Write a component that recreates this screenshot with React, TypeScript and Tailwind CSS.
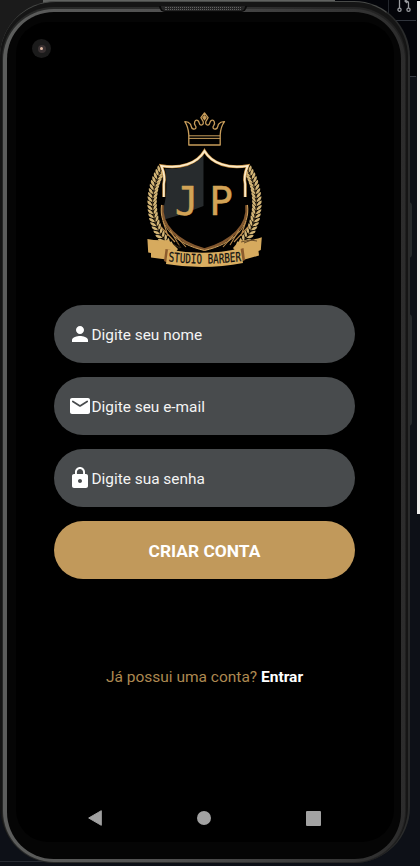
import type { ReactNode } from "react";

function Leaves() {
  const items: ReactNode[] = [];
  const count = 21;
  for (let i = 0; i < count; i++) {
    const t = i / (count - 1);
    const u = 1 - t;
    const x = u * u * u * 161 + 3 * u * u * t * 149 + 3 * u * t * t * 148 + t * t * t * 170;
    const y = u * u * u * 171 + 3 * u * u * t * 192 + 3 * u * t * t * 224 + t * t * t * 247;
    const lean = 24 - t * 62;
    items.push(
      <g key={i} transform={`translate(${x} ${y}) rotate(${lean})`}>
        <path d="M0 2 Q-5.5 .5 -5 -4 Q-1 -3 0 2Z" />
        <path d="M0 2 Q5 .5 4.5 -4 Q1 -3 0 2Z" />
      </g>
    );
  }
  return (
    <g fill="#d3b576">
      {items}
      <path d="M161 171 C149 192 148 224 170 247" fill="none" stroke="#4b3a20" strokeWidth=".8" />
    </g>
  );
}

function Logo() {
  return (
    <svg className="h-[160px] w-[120px]" viewBox="145 110 120 160" role="img" aria-label="JP Studio Barber">
      <g fill="none" stroke="#c89d5b" strokeWidth="1.3" strokeLinejoin="round">
        <path d="M188.8 145V135C188.5 129 187 125 184.8 121.7C187 121.6 189 122.3 190.4 124.1C191.6 125.7 190.5 128.5 193.3 129C196.3 129.5 196.6 127.2 195.2 125.4C193.6 123.2 194.8 119.4 197.5 120.3C200 121.2 198.4 124.8 201 125.1C203.9 125.3 204 121.6 202.1 119.7L200.9 117.6L204.5 113L208.1 117.6L206.9 119.7C205 121.6 205.1 125.3 208 125.1C210.6 124.8 209 121.2 211.5 120.3C214.2 119.4 215.4 123.2 213.8 125.4C212.4 127.2 212.7 129.5 215.7 129C218.5 128.5 217.4 125.7 218.6 124.1C220 122.3 222 121.6 224.5 121.7C222 125 220.5 129 220.2 135V145Z" />
        <path d="M188.8 135.8H220.2M188.8 138.4H220.2" strokeWidth="1" />
        <path d="M204.5 115.8L206.1 117.7L204.5 119.7L202.9 117.7Z" fill="#c89d5b" />
      </g>
      <Leaves />
      <g transform="translate(409 0) scale(-1 1)"><Leaves /></g>
      <path d="M204.5 151C198 162 180 169 161.5 165.5C166 180 164 195 161 211C163 230 184 246 204.5 251C225 246 246 230 248 211C245 195 243 180 247.5 165.5C229 169 211 162 204.5 151Z" fill="#010101" />
      <path d="M203.5 155C197 164 182 170 165 168.5C167 181 167 195 164 206L162.5 220L180 215L203.5 206Z" fill="#272b2d" />
      <path d="M162.5 205C160 225 177 242 204.5 249.5C232 242 249 225 246.5 205" fill="none" stroke="#80562e" strokeWidth="2.6" />
      <path d="M161.5 205C158.5 227 176 244 204.5 250.5C233 244 250.5 227 247.5 205" fill="none" stroke="#d0a15c" strokeWidth="1" />
      <path d="M163 221L168 236M160 226L175 242M246 221L241 236M249 226L234 242M170 230L179 245M239 230L230 245M176 236L186 247M233 236L223 247" stroke="#b98a4c" strokeWidth="1.1" />
      <path d="M163.8 197V184C165.5 177 163.5 171 161.3 165.8C180 169 197 164 204.5 151C212 164 229 169 247.7 165.8C245.5 171 243.5 177 245.2 184V197" fill="none" stroke="#c58d3f" strokeWidth="3" />
      <path d="M163.8 197V184C165.5 177 163.5 171 161.3 165.8C180 169 197 164 204.5 151C212 164 229 169 247.7 165.8C245.5 171 243.5 177 245.2 184V197" fill="none" stroke="#fbeac8" strokeWidth="1.8" />
      <path d="M147.4 239.1Q157 241 168 240L173 244L178 249L170 260L151 257.5L151 253L148.2 252.5Z" fill="#d6aa5e" />
      <path d="M261.8 237.2Q251 241 240 240L233 248L243 260L259 255.5L258.5 251L260.8 250Z" fill="#d6aa5e" />
      <path d="M165.5 249L171 250L168 263L164 261ZM243.5 248L237.5 250L241 262L245 260Z" fill="#8c5b2d" />
      <path d="M168 249.5Q204.5 256.5 240.5 248.5L243 263Q204.5 270.5 166 264Z" fill="#d9ad60" />
      <path d="M241 242L250 240L257 241M244 243L254 239M173 244L180 248M177 242L181 248" fill="none" stroke="#4e371d" strokeWidth=".8" />
      <g fill="#d2a356" fontFamily="'DejaVu Sans Mono', monospace" fontSize="39.5">
        <text x="174.8" y="214.8" stroke="#d2a356" strokeWidth=".4">J</text>
        <text x="209.2" y="214.8" stroke="#d2a356" strokeWidth=".4">P</text>
      </g>
      <defs><path id="ribbon-line" d="M240.7 261.2Q292.5 266.2 347 260.8" /></defs>
      <g transform="scale(.7 1)">
        <text fill="#111" stroke="#111" strokeWidth=".25" fontFamily="'DejaVu Sans Mono', monospace" fontSize="13">
          <textPath href="#ribbon-line" textLength="104" lengthAdjust="spacing">STUDIO BARBER</textPath>
        </text>
      </g>
    </svg>
  );
}

const icons = {
  person: "M12 12c2.21 0 4-1.79 4-4s-1.79-4-4-4-4 1.79-4 4 1.79 4 4 4zm0 2c-2.67 0-8 1.34-8 4v2h16v-2c0-2.66-5.33-4-8-4z",
  mail: "M20 4H4c-1.1 0-1.99.9-1.99 2L2 18c0 1.1.9 2 2 2h16c1.1 0 2-.9 2-2V6c0-1.1-.9-2-2-2zm-.4 4.25l-7.07 4.42c-.32.2-.74.2-1.06 0L4.4 8.25a.85.85 0 1 1 .9-1.44L12 11l6.7-4.19a.85.85 0 1 1 .9 1.44z",
  lock: "M18 8h-1V6c0-2.76-2.24-5-5-5S7 3.24 7 6v2H6c-1.1 0-2 .9-2 2v10c0 1.1.9 2 2 2h12c1.1 0 2-.9 2-2V10c0-1.1-.9-2-2-2zm-6 9c-1.1 0-2-.9-2-2s.9-2 2-2 2 .9 2 2-.9 2-2 2zm3.1-9H8.9V6c0-1.71 1.39-3.1 3.1-3.1s3.1 1.39 3.1 3.1v2z",
};

function Field({ icon, label }: { icon: keyof typeof icons; label: string }) {
  return (
    <label className="flex h-[58px] items-center rounded-full bg-[#484b4d] pl-[14px]">
      <svg className="size-6 shrink-0" viewBox="0 0 24 24" fill="white"><path d={icons[icon]} /></svg>
      <input className="-ml-[0.5px] w-[230px] bg-transparent pt-[3px] text-[15.4px] text-white outline-none placeholder:text-[#f4f4f4] placeholder:opacity-100" placeholder={label} aria-label={label} />
    </label>
  );
}

function Backdrop() {
  return (
    <div className="absolute inset-0" aria-hidden="true">
      <div className="absolute top-0 left-0 h-16 w-[43px] bg-[#1b1b1b]" />
      <div className="absolute top-0 left-[43px] h-2 w-[292px] bg-[#606260]" />
      <div className="absolute top-0 right-0 h-[76px] w-[85px] bg-[#030409]" />
      <div className="absolute top-5 right-1 h-px w-20 bg-[#30343c]" />
      <div className="absolute top-0 left-[388px] h-5 w-px bg-[#24272d]" />
      <div className="absolute top-[76px] right-1 h-px w-8 bg-[#343841]" />
      <div className="absolute top-px right-0 h-[513px] w-[3px] bg-[#efeeed]" />
      <div className="absolute top-[861px] left-0 h-px w-[204px] bg-[#282b32]" />
      <svg className="absolute top-[-3px] left-[396px] h-4 w-4" viewBox="0 0 16 16" fill="none" stroke="#9a9ca0" strokeWidth="1.3">
        <circle cx="3.5" cy="12.7" r="1.6" /><circle cx="12.5" cy="12.7" r="1.6" />
        <path d="M3.5 11V2M12.5 11V6Q12.5 4 9 4M11 2L9 4L11 6" />
      </svg>
      <div className="absolute top-[202px] left-[408px] h-[56px] w-1 rounded-r bg-[#26292c]" />
      <div className="absolute top-[314px] left-[408px] h-[112px] w-1 rounded-r bg-[#26292c]" />
    </div>
  );
}

export default function App() {
  return (
    <main className="relative h-[866px] w-[420px] overflow-hidden bg-[#0d1017] font-[Roboto,sans-serif]">
      <Backdrop />
      <div className="relative h-[863px] w-[410px] pt-px">
        <div className="h-[862px] rounded-[56px] border-t border-r-2 border-t-[#484a48] border-r-[#2a2b2b] bg-[#151515] pt-[5px] pr-[2px] pl-[2px]">
          <div className="h-[856px] rounded-[52px] bg-linear-to-r from-[#262726] via-[#303030] via-60% to-[#202020] pt-[2px] pr-px pb-px pl-px">
            <div className="h-[853px] rounded-[51px] bg-linear-to-r from-[#5c5d5c] from-1% via-[#505050] via-40% to-[#2c2c2c] pt-[3px] pr-[4px] pb-[3px] pl-[4px]">
              <div className="h-[847px] rounded-[47px] bg-[#050505] pt-[10px] pr-[7px] pb-4 pl-[9px]">
                <section className="flex h-[820px] flex-col rounded-[32px] bg-black pr-[39px] pl-[38px]">
                  <div className="flex h-[282.6px] shrink-0 justify-center pt-[88px]"><Logo /></div>
                  <form className="flex flex-col gap-[14.2px]" onSubmit={(e) => e.preventDefault()}>
                    <Field icon="person" label="Digite seu nome" />
                    <Field icon="mail" label="Digite seu e-mail" />
                    <Field icon="lock" label="Digite sua senha" />
                    <button className="h-[58px] rounded-full bg-[#c1995b] pt-px text-[17.4px] font-bold text-white">CRIAR CONTA</button>
                  </form>
                  <p className="mt-[86px] text-center text-[15.5px] leading-6 text-[#ad8951]">Já possui uma conta? <a className="font-bold text-white">Entrar</a></p>
                  <nav className="mt-auto mb-4 flex items-center justify-between pr-[34px] pl-[34px]">
                    <svg className="h-4 w-[14px]" viewBox="0 0 14 16"><path d="M13.3.7V15.3L.7 8Z" fill="#a2a2a2" stroke="#a2a2a2" strokeLinejoin="round" /></svg>
                    <div className="size-[14px] rounded-full bg-[#a2a2a2]" />
                    <div className="size-[15px] rounded-[1px] bg-[#a2a2a2]" />
                  </nav>
                </section>
              </div>
            </div>
          </div>
        </div>
        <div className="absolute top-[39px] left-[32px] flex size-[19px] items-center justify-center rounded-full bg-[#1b1b1b]">
          <div className="flex size-2 items-center justify-center rounded-full bg-[#393132]"><div className="size-[3px] rounded-full bg-[#e0b9a3]" /></div>
        </div>
        <div className="absolute top-[6px] left-[159px] h-[6px] w-[88px] rounded-b-md border-x-2 border-b border-[#0a0a0a] bg-[#252525] px-1 pt-px">
          <div className="h-[3px] border-y border-dotted border-[#626262]" />
        </div>
      </div>
    </main>
  );
}
